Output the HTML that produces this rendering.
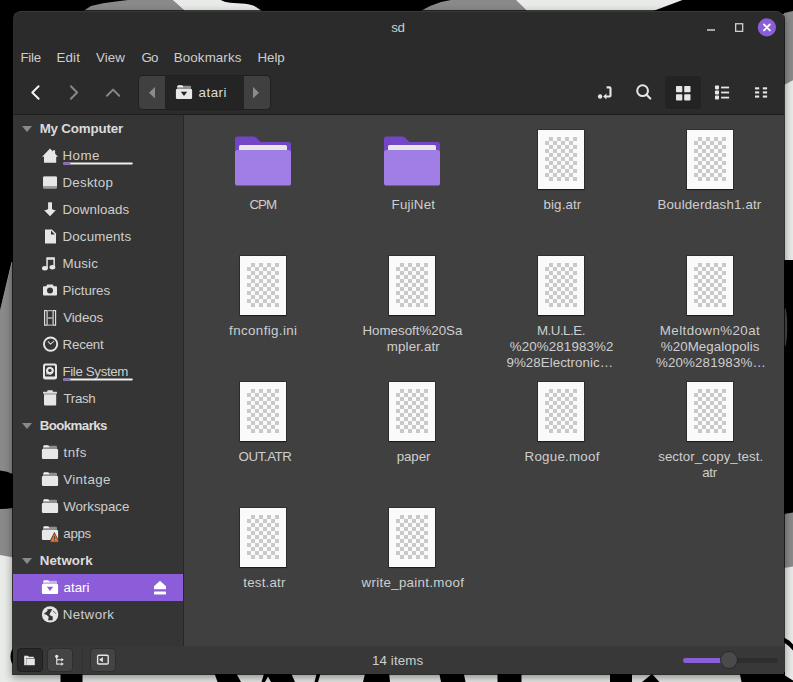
<!DOCTYPE html>
<html>
<head>
<meta charset="utf-8">
<title>sd</title>
<style>
*{box-sizing:border-box;margin:0;padding:0}
html,body{width:793px;height:682px;overflow:hidden;background:#e9ebe9;font-family:"Liberation Sans",sans-serif;font-size:13.33px;color:#dadada}
#wall{position:absolute;left:0;top:0;width:793px;height:682px}
#win{position:absolute;left:13px;top:11px;width:771px;height:663px;background:#2b2b2b;border-radius:8px 8px 0 0;box-shadow:0 0 0 1px rgba(0,0,0,.72),0 3px 8px 1px rgba(0,0,0,.39);overflow:hidden}
.abs{position:absolute}
.t{position:absolute;height:16px;line-height:16px;white-space:nowrap}
#sep{position:absolute;left:0;top:103px;width:771px;height:1px;background:#1d1d1d}
#side{position:absolute;left:0;top:104px;width:170px;height:531px;background:#353535}
#sideb{position:absolute;left:170px;top:104px;width:1px;height:531px;background:#272727}
#main{position:absolute;left:171px;top:104px;width:600px;height:531px;background:#404040}
#status{position:absolute;left:0;top:635px;width:771px;height:28px;background:#383838}
.row{position:absolute;left:0;width:170px;height:27px}
.row.sel{background:#8c5dd9}
.tri{position:absolute;left:8.5px;top:10.5px;width:0;height:0;border-left:5.7px solid transparent;border-right:5.7px solid transparent;border-top:6px solid #8a8a8a}
.file{position:absolute;width:46px;height:59px;background:#fafafa;box-shadow:0 0 0 1px rgba(0,0,0,.25),0 1px 1px rgba(0,0,0,.4)}
.file i{position:absolute;left:7px;top:7px;width:32px;height:44px;
background-image:conic-gradient(#fafafa 25%,#c9c9c9 0 50%,#fafafa 0 75%,#c9c9c9 0);background-size:8px 8px;background-position:4px 0}
</style>
</head>
<body>
<svg id="wall" viewBox="0 0 793 682">
<rect width="793" height="682" fill="#e9ebe9"/>
<!-- top strip -->
<rect x="0" y="0" width="793" height="14" fill="#000"/>
<polygon points="81.500,12 84,10.500 91,6 103,3.200 114,1.800 128,0 172.500,0 186,12" fill="#8a8a8a"/>
<path d="M172.500,0 L220.700,0 Q224,2 230,2.800 L245,3.800 Q252,4.500 256,7 L263.500,12 L186,12 Z" fill="#e9ebe9"/>
<path d="M419,12 L421.500,10.500 Q431,5 441,2 Q446,0.800 451,0 L515.700,0 L528,12 Z" fill="#8a8a8a"/>
<polygon points="515.700,0 682.500,0 650.600,12 528,12" fill="#e9ebe9"/>
<!-- left strip -->
<rect x="0" y="0" width="14" height="262" fill="#000"/>
<polygon points="14,254 14,557.500 0,555 0,310" fill="#8a8a8a"/>
<polygon points="0,262 14,262 14,252 0,310.500" fill="#000"/>
<path d="M0,470.400 Q7,470.600 14,474.500 L14,507.700 Q7,509 0,509 Z" fill="#000"/>
<ellipse cx="14" cy="656.500" rx="3.500" ry="8" fill="#000"/>
<!-- right strip -->
<polygon points="784,13 793,11 793,80.300 784,85" fill="#8a8a8a"/>
<rect x="784" y="260" width="9" height="254" fill="#000"/>
<ellipse cx="785" cy="327" rx="2.200" ry="19" fill="#4a4a4a"/>
<polygon points="784,514 793,512.500 793,566.500 784,568" fill="#8a8a8a"/>
<path d="M784,637.500 Q789.500,640 793,644.500 L793,650.500 Q789,645.500 784,642.500 Z" fill="#000"/>
<!-- bottom strip -->
<g fill="#000">
<rect x="60.500" y="672" width="22" height="10"/>
<polygon points="214,672 235.500,672 241,682 217.500,682"/>
<polygon points="264.500,672 290.500,672 295,682 271,682 268,676.500 265,682 261.500,682"/>
<polygon points="317,672 321,672 318,682 314.500,682"/>
<polygon points="365.500,672 389,672 390,682 363,682"/>
<polygon points="439,672 463.500,672 465.500,682 441,682"/>
<polygon points="497.500,672 521.500,672 521.500,682 497.500,682"/>
<polygon points="610,672 632,672 632,682 610,682"/>
<polygon points="652,674 659.500,682 642,682"/>
<polygon points="739.500,672 785,672 785,675.500 793,680.500 793,682 741.500,682"/>
</g>
</svg>
<div id="win">

<!-- window buttons -->
<div class="abs" style="left:694px;top:18px;width:8px;height:2px;background:#a6a6a6"></div>
<svg class="abs" style="left:718px;top:6px" width="50" height="22" viewBox="0 0 50 22">
<rect x="4.650" y="6.750" width="7" height="7.600" fill="none" stroke="#cfcfcf" stroke-width="1.300"/>
<circle cx="35.900" cy="10.400" r="9.100" fill="#8c5dd9"/>
<path d="M33,7.500 L38.800,13.300 M38.800,7.500 L33,13.300" stroke="#fff" stroke-width="1.900" stroke-linecap="round" fill="none"/>
</svg>
<!-- nav arrows -->
<svg class="abs" style="left:12px;top:70px" width="120" height="24" viewBox="0 0 120 24">
<path d="M13.600,5.300 L7.300,11.500 L13.600,17.700" stroke="#f2f2f2" stroke-width="2" fill="none" stroke-linecap="round" stroke-linejoin="round"/>
<path d="M45.900,5.300 L52.100,11.500 L45.900,17.700" stroke="#868686" stroke-width="2" fill="none" stroke-linecap="round" stroke-linejoin="round"/>
<path d="M82,14.800 L88.100,8.600 L94.200,14.800" stroke="#868686" stroke-width="2" fill="none" stroke-linecap="round" stroke-linejoin="round"/>
</svg>
<!-- path bar -->
<div class="abs" style="left:126px;top:65px;width:131px;height:33px;border-radius:4px;background:#242424;box-shadow:0 0 0 1px #1f1f1f;overflow:hidden">
<div class="abs" style="left:0;top:0;width:26px;height:33px;background:#404040"></div>
<div class="abs" style="left:104.5px;top:0;width:27px;height:33px;background:#404040"></div>
<svg class="abs" style="left:0;top:0" width="131" height="33" viewBox="0 0 131 33">
<polygon points="16,11 16,22.5 10,16.7" fill="#8c8c8c"/>
<polygon points="114,11 114,22.5 120,16.7" fill="#8c8c8c"/>
<g transform="translate(37,8.5)">
<path d="M1,4.800 V2.200 Q1,1.200 2,1.200 H14 Q15,1.200 15,2.200 V4.800 Z" fill="#8f8f8f"/>
<path d="M1.500,2.700 V1.700 Q1.500,0.700 2.500,0.700 H5.700 Q6.500,0.700 6.900,1.400 L7.500,2.700 Z" fill="#f2f2f2"/>
<rect x="-0.1" y="4.400" width="16.200" height="10" rx="1.200" fill="#e8e8e8"/>
<polygon points="4.800,7.200 11.200,7.200 8,11.600" fill="#242424"/>
</g>
</svg>
</div>
<!-- right toolbar icons -->
<div class="abs" style="left:652px;top:64.500px;width:35.500px;height:33.500px;border-radius:4px;background:#232323"></div>
<svg class="abs" style="left:580px;top:70px" width="180" height="24" viewBox="0 0 180 24">
<g fill="#e6e6e6" stroke="none">
<circle cx="7.100" cy="15.500" r="2.200"/>
<polygon points="10.200,15.500 13.400,12.500 13.400,18.500"/>
<rect x="83" y="5" width="6.300" height="6.300" rx="0.800"/><rect x="91.200" y="5" width="6.300" height="6.300" rx="0.800"/>
<rect x="83" y="13.200" width="6.300" height="6.300" rx="0.800"/><rect x="91.200" y="13.200" width="6.300" height="6.300" rx="0.800"/>
<rect x="122" y="4.400" width="4" height="4" rx="0.800"/><rect x="128.100" y="5.600" width="8" height="1.800"/>
<rect x="122" y="9.500" width="4" height="4" rx="0.800"/><rect x="128.100" y="10.600" width="8" height="1.800"/>
<rect x="122" y="14.600" width="4" height="4" rx="0.800"/><rect x="128.100" y="15.700" width="8" height="1.800"/>
<rect x="162" y="6.300" width="4.200" height="2.100"/><rect x="169.800" y="6.300" width="4.300" height="2.100"/>
<rect x="162" y="10.400" width="4.200" height="2.100"/><rect x="169.800" y="10.400" width="4.300" height="2.100"/>
<rect x="162" y="14.500" width="4.200" height="2.100"/><rect x="169.800" y="14.500" width="4.300" height="2.100"/>
</g>
<path d="M13.600,6.400 H16.500 Q17.500,6.400 17.500,7.400 V14.500 Q17.500,15.500 16.500,15.500 H13" fill="none" stroke="#e6e6e6" stroke-width="2.100"/>
<circle cx="49.600" cy="9.700" r="5.400" fill="none" stroke="#e6e6e6" stroke-width="2"/>
<path d="M53.600,13.800 L57.300,17.500" stroke="#e6e6e6" stroke-width="2.200" stroke-linecap="round"/>
</svg>

<div id="sep"></div>
<div id="side">
<div class="row h" style="top:0px"><b class="tri"></b></div>
<div class="row" style="top:27px"><svg class="abs" style="left:29px;top:5px;overflow:visible" width="16" height="17" viewBox="0 0 16 17"><g transform="translate(0,0.5)"><path d="M8,1.100 L0.100,9.200 L2,9.200 L2,15.200 L14.200,15.200 L14.200,9.200 L16.100,9.200 L13.100,6.200 L13.100,2.800 L10.900,2.800 L10.900,4 Z" fill="#e6e6e6"/></g></svg><svg class="abs" style="left:50px;top:20px" width="71" height="4" viewBox="0 0 71 4"><rect x="0.100" y="0.400" width="69.700" height="2.100" rx="1" fill="#efefef"/><path d="M1.100,0.400 H7.400 V2.500 H1.100 Q0.100,2.500 0.100,1.450 Q0.100,0.400 1.100,0.400 Z" fill="#8c5dd9"/></svg></div>
<div class="row" style="top:54px"><svg class="abs" style="left:29px;top:5px;overflow:visible" width="16" height="17" viewBox="0 0 16 17"><g transform="translate(0,0.5)"><rect x="1" y="1.900" width="14" height="12.400" rx="1.300" fill="#9c9c9c"/><path d="M1,11.600 V3.200 q0,-1.300 1.300,-1.300 h11.400 q1.300,0 1.300,1.300 V11.600 Z" fill="#e6e6e6"/></g></svg></div>
<div class="row" style="top:81px"><svg class="abs" style="left:29px;top:5px;overflow:visible" width="16" height="17" viewBox="0 0 16 17"><g transform="translate(0,0.5)"><rect x="6.100" y="0.800" width="3.900" height="8.500" fill="#e6e6e6"/><path d="M2,8.600 Q5,8.900 6.100,7.600 L10,7.600 Q11,8.900 14,8.600 L8,14.700 Z" fill="#e6e6e6"/></g></svg></div>
<div class="row" style="top:108px"><svg class="abs" style="left:29px;top:5px;overflow:visible" width="16" height="17" viewBox="0 0 16 17"><g transform="translate(0,0.5)"><path d="M3,0.900 H10 L14,4.900 V15.100 H3 Z" fill="#e6e6e6"/><path d="M9,2 L9,5.900 L12.900,5.900 Z" fill="#353535"/></g></svg></div>
<div class="row" style="top:135px"><svg class="abs" style="left:29px;top:5px;overflow:visible" width="16" height="17" viewBox="0 0 16 17"><g transform="translate(0,0.5)"><path d="M4.300,1.800 H12.900 V11.700 H11.400 V4.300 H5.800 V12.700 H4.300 Z" fill="#e6e6e6"/><ellipse cx="2.900" cy="12.700" rx="2.900" ry="2.200" fill="#e6e6e6"/><ellipse cx="10.400" cy="11.700" rx="2.900" ry="2.200" fill="#e6e6e6"/></g></svg></div>
<div class="row" style="top:162px"><svg class="abs" style="left:29px;top:5px;overflow:visible" width="16" height="17" viewBox="0 0 16 17"><g transform="translate(0,0.5)"><path d="M2,3.800 H4.300 L5.200,1.900 H10.800 L11.700,3.800 H14 q1,0 1,1 V11.900 q0,1 -1,1 H2 q-1,0 -1,-1 V4.800 q0,-1 1,-1 Z" fill="#e6e6e6"/><circle cx="8" cy="8" r="3" fill="#353535"/></g></svg></div>
<div class="row" style="top:189px"><svg class="abs" style="left:29px;top:5px;overflow:visible" width="16" height="17" viewBox="0 0 16 17"><g transform="translate(0,0.5)"><rect x="2.600" y="1.100" width="2.500" height="14.600" fill="none" stroke="#e6e6e6" stroke-width="1.100"/><rect x="11.100" y="1.100" width="2.500" height="14.600" fill="none" stroke="#e6e6e6" stroke-width="1.100"/><path d="M5.600,1.200 H10.600 M5.600,8.500 H10.600 M5.600,15.600 H10.600" stroke="#b4b4b4" stroke-width="1.300" fill="none"/></g></svg></div>
<div class="row" style="top:216px"><svg class="abs" style="left:29px;top:5px;overflow:visible" width="16" height="17" viewBox="0 0 16 17"><g transform="translate(0,0.5)"><circle cx="8.600" cy="7.600" r="6.650" fill="none" stroke="#e6e6e6" stroke-width="1.900"/><path d="M6.200,5.100 L8.500,7.600 L11.700,4.800" stroke="#d0d0d0" stroke-width="1.100" fill="none" stroke-linecap="round" stroke-linejoin="round"/></g></svg></div>
<div class="row" style="top:243px"><svg class="abs" style="left:29px;top:5px;overflow:visible" width="16" height="17" viewBox="0 0 16 17"><g transform="translate(0,0.5)"><rect x="1" y="-0.100" width="14" height="16.200" rx="2.400" fill="#e6e6e6"/><rect x="3" y="1.900" width="10" height="11.200" rx="0.800" fill="#353535"/><path d="M7.900,3.200 a4,4 0 1 1 -2.200,7.350 l-1.700,0.750 l0.600,-1.900 a4,4 0 0 1 3.300,-6.200 Z" fill="#e6e6e6"/><circle cx="7.900" cy="6.900" r="1.700" fill="#353535"/></g></svg><svg class="abs" style="left:50px;top:20px" width="71" height="4" viewBox="0 0 71 4"><rect x="0.100" y="0.400" width="69.700" height="2.100" rx="1" fill="#efefef"/><path d="M1.100,0.400 H7.400 V2.500 H1.100 Q0.100,2.500 0.100,1.450 Q0.100,0.400 1.100,0.400 Z" fill="#8c5dd9"/></svg></div>
<div class="row" style="top:270px"><svg class="abs" style="left:29px;top:5px;overflow:visible" width="16" height="17" viewBox="0 0 16 17"><g transform="translate(0,0.5)"><rect x="5.300" y="-0.200" width="5.500" height="2" rx="0.600" fill="#e6e6e6"/><rect x="1" y="1.200" width="14" height="2" rx="0.500" fill="#dcdcdc"/><path d="M2,3.800 H14.200 V14 q0,1.100 -1.100,1.100 H3.100 q-1.100,0 -1.100,-1.100 Z" fill="#e6e6e6"/></g></svg></div>
<div class="row h" style="top:297px"><b class="tri"></b></div>
<div class="row" style="top:324px"><svg class="abs" style="left:29px;top:5px;overflow:visible" width="16" height="17" viewBox="0 0 16 17"><g transform="translate(0,0.5)"><path d="M1,4.8 V2.2 Q1,1.200 2,1.200 H14 Q15,1.200 15,2.200 V4.8 Z" fill="#8f8f8f"/><path d="M1.5,2.700 V1.700 Q1.500,0.700 2.500,0.700 H5.700 Q6.500,0.700 6.900,1.400 L7.500,2.700 Z" fill="#f2f2f2"/><rect x="-0.1" y="4.400" width="16.200" height="10" rx="1.200" fill="#e8e8e8"/></g></svg></div>
<div class="row" style="top:351px"><svg class="abs" style="left:29px;top:5px;overflow:visible" width="16" height="17" viewBox="0 0 16 17"><g transform="translate(0,0.5)"><path d="M1,4.8 V2.2 Q1,1.200 2,1.200 H14 Q15,1.200 15,2.200 V4.8 Z" fill="#8f8f8f"/><path d="M1.5,2.700 V1.700 Q1.500,0.700 2.500,0.700 H5.700 Q6.500,0.700 6.900,1.400 L7.500,2.700 Z" fill="#f2f2f2"/><rect x="-0.1" y="4.400" width="16.200" height="10" rx="1.200" fill="#e8e8e8"/></g></svg></div>
<div class="row" style="top:378px"><svg class="abs" style="left:29px;top:5px;overflow:visible" width="16" height="17" viewBox="0 0 16 17"><g transform="translate(0,0.5)"><path d="M1,4.8 V2.2 Q1,1.200 2,1.200 H14 Q15,1.200 15,2.200 V4.8 Z" fill="#8f8f8f"/><path d="M1.5,2.700 V1.700 Q1.500,0.700 2.500,0.700 H5.700 Q6.500,0.700 6.900,1.400 L7.500,2.700 Z" fill="#f2f2f2"/><rect x="-0.1" y="4.400" width="16.200" height="10" rx="1.200" fill="#e8e8e8"/></g></svg></div>
<div class="row" style="top:405px"><svg class="abs" style="left:29px;top:5px;overflow:visible" width="16" height="17" viewBox="0 0 16 17"><g transform="translate(0,0.5)"><path d="M1,4.8 V2.2 Q1,1.200 2,1.200 H14 Q15,1.200 15,2.200 V4.8 Z" fill="#8f8f8f"/><path d="M1.5,2.700 V1.700 Q1.500,0.700 2.500,0.700 H5.700 Q6.500,0.700 6.900,1.400 L7.500,2.700 Z" fill="#f2f2f2"/><rect x="-0.1" y="4.400" width="16.200" height="10" rx="1.200" fill="#e8e8e8"/><path d="M12.400,6.600 L6.900,16.900 L17.900,16.900 Z" fill="#353535"/><path d="M12.400,8.600 L8.800,16.100 L16.300,16.100 Z" fill="#e8752c" stroke="#e8752c" stroke-width="0.600" stroke-linejoin="round"/><rect x="11.950" y="10.800" width="0.900" height="2.600" fill="#3a2a22"/><rect x="11.950" y="14.200" width="0.900" height="0.900" fill="#3a2a22"/></g></svg></div>
<div class="row h" style="top:432px"><b class="tri"></b></div>
<div class="row sel" style="top:459px"><svg class="abs" style="left:29px;top:5px;overflow:visible" width="16" height="17" viewBox="0 0 16 17"><g transform="translate(0,0.5)"><path d="M1,4.8 V2.2 Q1,1.200 2,1.200 H14 Q15,1.200 15,2.200 V4.8 Z" fill="#c9b3ee"/><path d="M1.5,2.700 V1.700 Q1.500,0.700 2.500,0.700 H5.700 Q6.500,0.700 6.900,1.400 L7.500,2.700 Z" fill="#ffffff"/><rect x="-0.1" y="4.400" width="16.200" height="10" rx="1.200" fill="#ffffff"/><polygon points="4.800,7.200 11.200,7.200 8,11.600" fill="#8c5dd9"/></g></svg><svg class="abs" style="left:139px;top:6px" width="16" height="16" viewBox="0 0 16 16"><path d="M8,0.800 L14,6.200 V8.800 Q14,9.300 13.500,9.300 H2.500 Q2,9.300 2,8.800 V6.200 Z" fill="#fff"/><rect x="2" y="11.600" width="12" height="2.800" rx="0.600" fill="#fff"/></svg></div>
<div class="row" style="top:486px"><svg class="abs" style="left:29px;top:5px;overflow:visible" width="16" height="17" viewBox="0 0 16 17"><g transform="translate(0,0.5)"><circle cx="8.100" cy="7.900" r="8.200" fill="#e6e6e6"/><path d="M5,2.800 L10.300,2.500 L9,5 L8,6.700 L7.500,8.500 L10.700,10 L10.700,13.800 L6,13.800 L6.800,10.500 L4.500,8.300 L2.300,7.800 L2.300,6.700 L4.300,5.500 L5.800,3.800 Z" fill="#353535"/><path d="M10.800,4.600 L12.600,5.600 L14,7.400" stroke="#353535" stroke-width="0.700" fill="none"/></g></svg></div>
</div>
<div id="sideb"></div>
<div id="main">
<svg class="abs" style="left:51px;top:21px" width="56" height="50" viewBox="0 0 56 50">
<path d="M2.5,0.500 H18.5 Q20,0.500 21,1.500 L25.5,6 H53.5 Q56,6 56,8.500 V20 H0 V3 Q0,0.500 2.500,0.500 Z" fill="#7444c9"/>
<rect x="4" y="9" width="48" height="12" rx="1.500" fill="#e6e6e6"/>
<path d="M2.5,14 H53.5 Q56,14 56,16.500 V47 Q56,49.600 53.500,49.600 H2.5 Q0,49.600 0,47 V16.500 Q0,14 2.500,14 Z" fill="#a17ee6"/>
</svg>
<svg class="abs" style="left:200px;top:21px" width="56" height="50" viewBox="0 0 56 50">
<path d="M2.5,0.500 H18.5 Q20,0.500 21,1.500 L25.5,6 H53.5 Q56,6 56,8.500 V20 H0 V3 Q0,0.500 2.500,0.500 Z" fill="#7444c9"/>
<rect x="4" y="9" width="48" height="12" rx="1.500" fill="#e6e6e6"/>
<path d="M2.5,14 H53.5 Q56,14 56,16.500 V47 Q56,49.600 53.500,49.600 H2.5 Q0,49.600 0,47 V16.500 Q0,14 2.500,14 Z" fill="#a17ee6"/>
</svg>
<div class="file" style="left:354px;top:15px"><i></i></div>
<div class="file" style="left:503px;top:15px"><i></i></div>
<div class="file" style="left:56px;top:141px"><i></i></div>
<div class="file" style="left:205px;top:141px"><i></i></div>
<div class="file" style="left:354px;top:141px"><i></i></div>
<div class="file" style="left:503px;top:141px"><i></i></div>
<div class="file" style="left:56px;top:267px"><i></i></div>
<div class="file" style="left:205px;top:267px"><i></i></div>
<div class="file" style="left:354px;top:267px"><i></i></div>
<div class="file" style="left:503px;top:267px"><i></i></div>
<div class="file" style="left:56px;top:393px"><i></i></div>
<div class="file" style="left:205px;top:393px"><i></i></div>
</div>
<div id="status">
<div class="abs" style="left:5px;top:3px;width:24px;height:22px;border-radius:3.500px;background:#2a2a2a;box-shadow:0 0 0 1px #1e1e1e"></div>
<div class="abs" style="left:35px;top:3px;width:24px;height:22px;border-radius:3.500px;background:#444;box-shadow:0 0 0 1px #2f2f2f"></div>
<div class="abs" style="left:78px;top:3px;width:24px;height:22px;border-radius:3.500px;background:#444;box-shadow:0 0 0 1px #2f2f2f"></div>
<div class="abs" style="left:68.5px;top:1px;width:1px;height:26px;background:#303030"></div>
<svg class="abs" style="left:0;top:-1px" width="110" height="30" viewBox="0 0 110 30">
<g fill="#e6e6e6">
<path d="M11.2,10.700 h3.600 l1,1 h5 v1.400 h-9.600 z"/><rect x="11.200" y="12.400" width="1.900" height="7.800"/><rect x="13.300" y="13.500" width="8.500" height="6.700"/>
<circle cx="43.700" cy="11.300" r="1.600"/><rect x="43.200" y="11" width="1.100" height="8.600"/><rect x="43.700" y="14.200" width="5.600" height="1.100"/><rect x="43.700" y="18.500" width="5.600" height="1.100"/>
<polygon points="48.300,13 50.800,14.750 48.300,16.500"/><polygon points="48.300,17.300 50.800,19.050 48.300,20.800"/>
</g>
<rect x="84.600" y="10.300" width="10.600" height="8.700" rx="1" fill="none" stroke="#e6e6e6" stroke-width="1.400"/>
<polygon points="89.900,12 89.900,17.300 86.100,14.650" fill="#e6e6e6"/>
</svg>
<div class="abs" style="left:670px;top:11.500px;width:95px;height:5px;border-radius:3px;background:#2e2e2e"></div>
<div class="abs" style="left:670px;top:11.500px;width:45px;height:5px;border-radius:3px;background:#8c5dd9"></div>
<div class="abs" style="left:708.400px;top:6px;width:16px;height:16px;border-radius:50%;background:#4a4a4a;box-shadow:0 0 0 1px #2a2a2a"></div>
</div>
<div class="t" style="left:378.30px;top:9.10px;letter-spacing:-0.564px;color:#cecece">sd</div>
<div class="t" style="left:7.40px;top:38.60px;letter-spacing:-0.221px;color:#cecece">File</div>
<div class="t" style="left:43.60px;top:38.60px;letter-spacing:0.112px;color:#cecece">Edit</div>
<div class="t" style="left:83.10px;top:38.60px;letter-spacing:0.026px;color:#cecece">View</div>
<div class="t" style="left:128.50px;top:38.60px;letter-spacing:-0.900px;color:#cecece">Go</div>
<div class="t" style="left:160.80px;top:38.60px;letter-spacing:0.113px;color:#cecece">Bookmarks</div>
<div class="t" style="left:244.50px;top:38.60px;letter-spacing:-0.066px;color:#cecece">Help</div>
<div class="t" style="left:185.50px;top:73.90px;letter-spacing:0.508px;color:#dedede">atari</div>
<div class="t" style="left:359.00px;top:642.10px;letter-spacing:0.113px;color:#cecece">14 items</div>
<div class="t" style="left:26.70px;top:109.80px;letter-spacing:-0.177px;color:#dcdcdc;font-weight:bold">My Computer</div>
<div class="t" style="left:49.50px;top:136.80px;letter-spacing:0.487px;color:#cecece">Home</div>
<div class="t" style="left:49.50px;top:163.80px;letter-spacing:0.236px;color:#cecece">Desktop</div>
<div class="t" style="left:49.50px;top:190.80px;letter-spacing:0.078px;color:#cecece">Downloads</div>
<div class="t" style="left:49.50px;top:217.80px;letter-spacing:0.144px;color:#cecece">Documents</div>
<div class="t" style="left:49.50px;top:244.80px;letter-spacing:0.140px;color:#cecece">Music</div>
<div class="t" style="left:49.50px;top:271.80px;letter-spacing:-0.083px;color:#cecece">Pictures</div>
<div class="t" style="left:50.20px;top:298.80px;letter-spacing:-0.109px;color:#cecece">Videos</div>
<div class="t" style="left:49.50px;top:325.80px;letter-spacing:-0.185px;color:#cecece">Recent</div>
<div class="t" style="left:49.50px;top:352.80px;letter-spacing:-0.371px;color:#cecece">File System</div>
<div class="t" style="left:50.60px;top:379.80px;letter-spacing:-0.390px;color:#cecece">Trash</div>
<div class="t" style="left:26.70px;top:406.80px;letter-spacing:-0.598px;color:#dcdcdc;font-weight:bold">Bookmarks</div>
<div class="t" style="left:50.50px;top:433.80px;letter-spacing:0.461px;color:#cecece">tnfs</div>
<div class="t" style="left:50.20px;top:460.80px;letter-spacing:0.375px;color:#cecece">Vintage</div>
<div class="t" style="left:50.20px;top:487.80px;letter-spacing:-0.038px;color:#cecece">Workspace</div>
<div class="t" style="left:50.30px;top:514.80px;letter-spacing:-0.312px;color:#cecece">apps</div>
<div class="t" style="left:26.70px;top:541.80px;letter-spacing:0.071px;color:#dcdcdc;font-weight:bold">Network</div>
<div class="t" style="left:50.50px;top:568.80px;letter-spacing:0.008px;color:#ffffff">atari</div>
<div class="t" style="left:49.70px;top:595.80px;letter-spacing:0.397px;color:#cecece">Network</div>
<div class="t" style="left:236.40px;top:186.10px;letter-spacing:-0.900px;color:#cecece">CPM</div>
<div class="t" style="left:378.60px;top:186.10px;letter-spacing:0.198px;color:#cecece">FujiNet</div>
<div class="t" style="left:530.50px;top:186.10px;letter-spacing:0.116px;color:#cecece">big.atr</div>
<div class="t" style="left:644.50px;top:186.10px;letter-spacing:0.149px;color:#cecece">Boulderdash1.atr</div>
<div class="t" style="left:216.10px;top:312.10px;letter-spacing:0.386px;color:#cecece">fnconfig.ini</div>
<div class="t" style="left:349.50px;top:312.10px;letter-spacing:-0.008px;color:#cecece">Homesoft%20Sa</div>
<div class="t" style="left:373.80px;top:328.10px;letter-spacing:0.136px;color:#cecece">mpler.atr</div>
<div class="t" style="left:523.90px;top:312.10px;letter-spacing:-0.477px;color:#cecece">M.U.L.E.</div>
<div class="t" style="left:496.70px;top:328.10px;letter-spacing:0.132px;color:#cecece">%20%281983%2</div>
<div class="t" style="left:493.50px;top:344.10px;letter-spacing:0.042px;color:#cecece">9%28Electronic…</div>
<div class="t" style="left:646.80px;top:312.10px;letter-spacing:0.423px;color:#cecece">Meltdown%20at</div>
<div class="t" style="left:647.80px;top:328.10px;letter-spacing:0.059px;color:#cecece">%20Megalopolis</div>
<div class="t" style="left:642.90px;top:344.10px;letter-spacing:0.159px;color:#cecece">%20%281983%…</div>
<div class="t" style="left:225.50px;top:438.10px;letter-spacing:-0.433px;color:#cecece">OUT.ATR</div>
<div class="t" style="left:383.70px;top:438.10px;letter-spacing:-0.087px;color:#cecece">paper</div>
<div class="t" style="left:511.50px;top:438.10px;letter-spacing:0.255px;color:#cecece">Rogue.moof</div>
<div class="t" style="left:645.20px;top:438.10px;letter-spacing:0.028px;color:#cecece">sector_copy_test.</div>
<div class="t" style="left:689.30px;top:454.10px;letter-spacing:-0.358px;color:#cecece">atr</div>
<div class="t" style="left:230.30px;top:564.10px;letter-spacing:0.200px;color:#cecece">test.atr</div>
<div class="t" style="left:348.50px;top:564.10px;letter-spacing:0.308px;color:#cecece">write_paint.moof</div>
<div class="abs" style="left:0;top:0;width:771px;height:20px;border-radius:8px 8px 0 0;box-shadow:inset 0 1px 0 rgba(255,255,255,.07);pointer-events:none"></div>
</div>
</body>
</html>
